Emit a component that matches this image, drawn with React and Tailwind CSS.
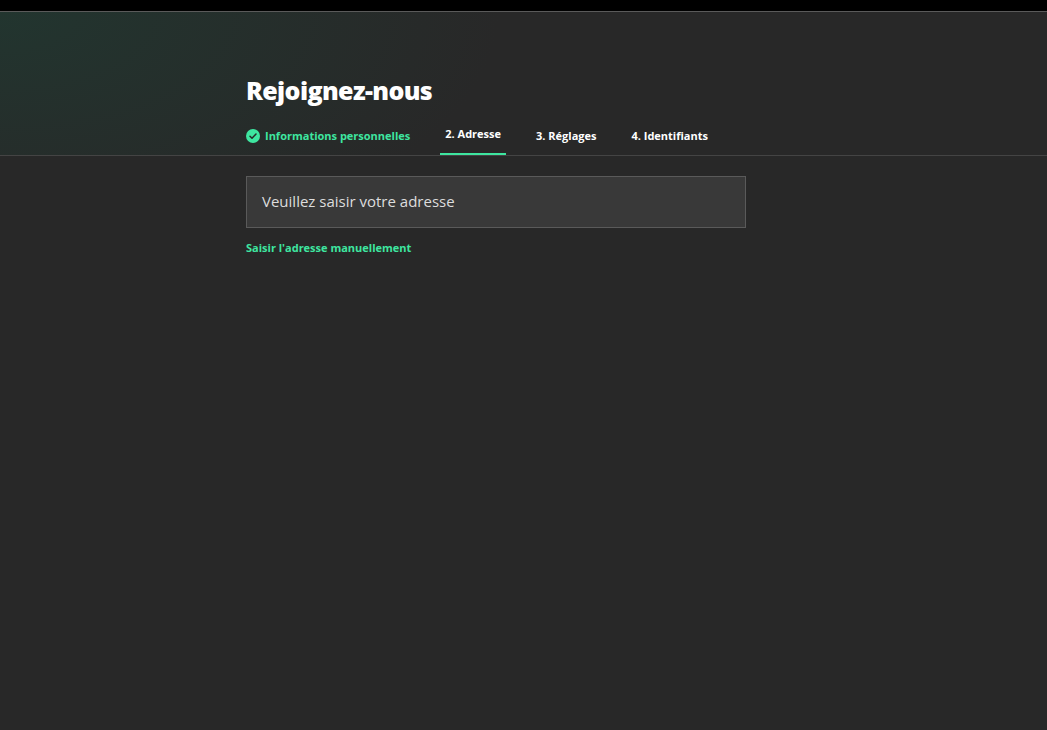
export default function App() {
  const font = { fontFamily: '"Open Sans", "Noto Sans", sans-serif' };
  return (
    <div className="min-h-[730px] bg-[#282828] text-white" style={font}>
      <div className="h-[12px] bg-black border-b border-[#5a5a5a]" />
      <div className="bg-[radial-gradient(ellipse_500px_250px_at_0%_0%,#22352f,transparent)] border-b border-[#444]">
        <div className="pl-[246px] pt-[61px]">
          <h1 className="text-[25px] leading-[34px] font-extrabold tracking-tight">Rejoignez-nous</h1>
          <div className="mt-[19px] flex items-end text-[11px] font-bold">
            <div className="flex items-center gap-[5px] pb-[10px] text-[#3ee6a0]">
              <svg width="14" height="14" viewBox="0 0 14 14">
                <circle cx="7" cy="7" r="7" fill="#3ee6a0" />
                <path d="M4 7.2l2 2 4-4.2" stroke="#282828" strokeWidth="1.5" fill="none" strokeLinecap="round" strokeLinejoin="round" />
              </svg>
              Informations personnelles
            </div>
            <div className="ml-[30px] px-[5px] pb-[10px] border-b-2 border-[#3ee6a0]">2. Adresse</div>
            <div className="ml-[30px] pb-[10px]">3. Réglages</div>
            <div className="ml-[35px] pb-[10px]">4. Identifiants</div>
          </div>
        </div>
      </div>
      <div className="pl-[246px] pt-[20px]">
        <div className="w-[500px] h-[52px] bg-[#393939] border border-[#5a5a5a] flex items-center px-[15px] text-[15px] text-[#ddd]">
          Veuillez saisir votre adresse
        </div>
        <div className="mt-[12px] text-[11px] font-bold text-[#3ee6a0]">Saisir l'adresse manuellement</div>
      </div>
    </div>
  );
}
